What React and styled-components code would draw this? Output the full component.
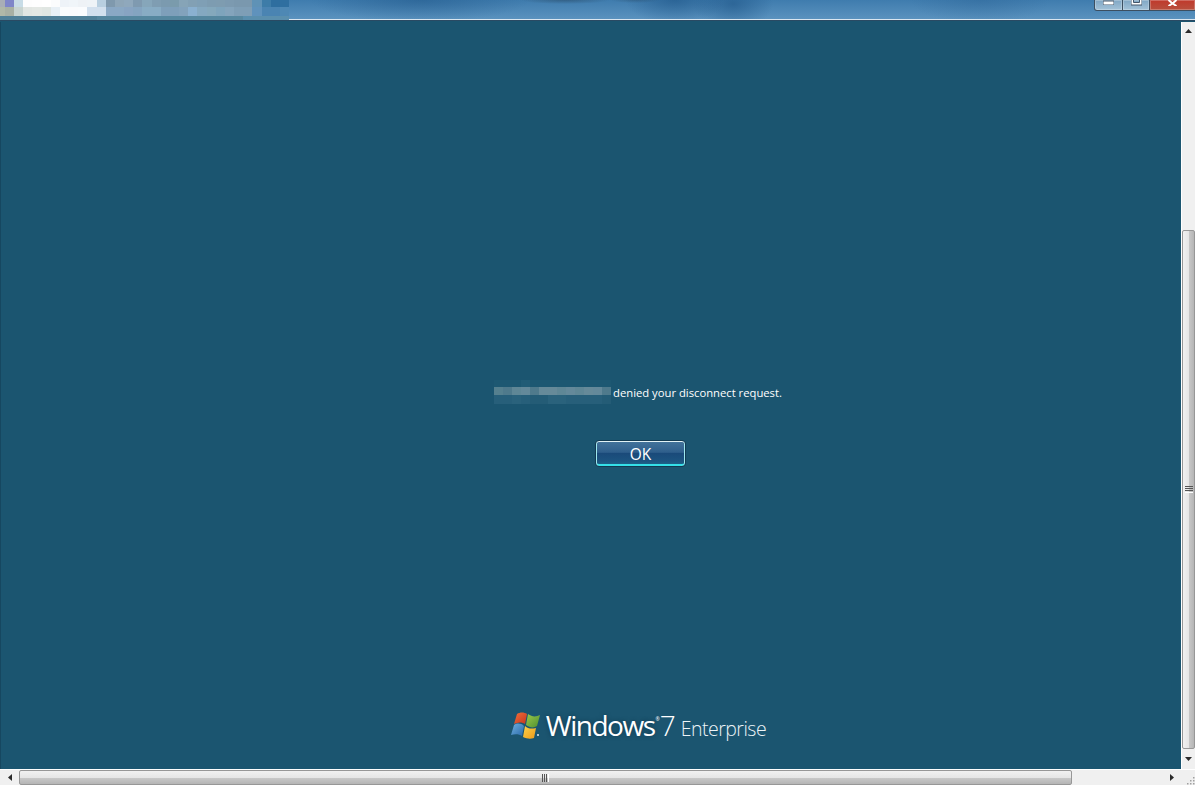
import React from 'react';
import styled, { createGlobalStyle } from 'styled-components';

const GlobalStyle = createGlobalStyle`
  html, body {
    margin: 0;
    padding: 0;
    height: 100%;
    overflow: hidden;
    background: #1b5570;
  }
`;

const Page = styled.div`
  width: 1195px;
  height: 785px;
  display: flex;
  flex-direction: column;
  font-family: "Open Sans", "Noto Sans", sans-serif;
`;

const TitleBar = styled.div`
  height: 19px;
  flex: none;
  display: flex;
  justify-content: space-between;
  align-items: flex-start;
  background:
    radial-gradient(ellipse 45px 4px at 565px 0, rgba(40, 70, 95, 0.5), transparent),
    radial-gradient(ellipse 25px 3px at 635px 0, rgba(40, 70, 95, 0.35), transparent),
    radial-gradient(ellipse 110px 22px at 420px 0, rgba(30, 85, 135, 0.5), transparent),
    radial-gradient(ellipse 50px 24px at 675px 0, rgba(30, 85, 135, 0.6), transparent),
    radial-gradient(ellipse 40px 26px at 733px 4px, rgba(30, 85, 135, 0.6), transparent),
    radial-gradient(ellipse 70px 24px at 980px 0, rgba(40, 95, 145, 0.35), transparent),
    linear-gradient(180deg, #3f7cae 0%, #5a92be 100%);
  border-bottom: 1px solid #d9e6f0;
  box-shadow: 0 1px 0 #2a4a63;
  position: relative;
`;

const Mosaic = styled.div`
  display: grid;
  grid-template-columns: 5px repeat(31, 1fr);
  grid-template-rows: 7px 9px 4px;
  width: 289px;
  flex: none;
`;

const Pixel = styled.span`
  background: ${(p) => p.$c};
`;

const WindowButtons = styled.div`
  display: flex;
  height: 11px;
`;

const CaptionButton = styled.div`
  width: ${(p) => p.$w}px;
  display: flex;
  justify-content: center;
  align-items: flex-start;
  box-sizing: border-box;
  border: 1px solid #3c4f61;
  border-top: none;
  border-left-width: ${(p) => (p.$first ? 1 : 0)}px;
  border-right-width: ${(p) => (p.$last ? 0 : 1)}px;
  border-radius: 0 0 0 ${(p) => (p.$first ? 3 : 0)}px;
  background: ${(p) => p.$bg};
  box-shadow: inset 0 0 0 1px rgba(255, 255, 255, 0.25);
`;

const Middle = styled.div`
  flex: 1;
  display: flex;
  min-height: 0;
  margin-top: 2px;
`;

const Stage = styled.main`
  flex: 1;
  min-width: 0;
  overflow: hidden;
  background: #1b5570;
  border-left: 1px solid #164760;
`;

/* the dialog is laid out wider than the window, hence the scrollbars */
const Canvas = styled.div`
  width: 1279px;
  height: 100%;
  display: flex;
  flex-direction: column;
  align-items: center;
  padding-top: 357px;
  box-sizing: border-box;
`;

const Message = styled.div`
  display: flex;
  align-items: center;
  height: 26px;
  margin-right: 5px;
  gap: 2px;
  font-size: 11.25px;
  color: #fff;
  white-space: nowrap;
`;

const Redacted = styled.div`
  display: grid;
  grid-template-columns: repeat(13, 9px);
  grid-template-rows: 7px 8px 9px;
  width: 117px;
`;

const OkButton = styled.button`
  width: 91px;
  height: 27px;
  margin-top: 35px;
  padding: 0;
  flex: none;
  box-sizing: border-box;
  border: 1px solid #123a52;
  border-radius: 4px;
  outline: none;
  box-shadow: inset 0 1px 0 #e2f2f6, inset 2px 0 0 -1px #9fe8ee, inset 1px 0 0 #9fe8ee, inset -1px 0 0 #9fe8ee, inset 0 -2px 0 #35e0e8;
  background: linear-gradient(180deg, #44749c 0%, #2f5f8c 45%, #1a4a7a 50%, #1c5480 80%, #1f6a8c 100%);
  color: #fff;
  font: 400 15.5px "Open Sans", sans-serif;
`;

const Brand = styled.div`
  margin-top: auto;
  margin-bottom: 27px;
  margin-right: 4px;
  display: flex;
  align-items: center;
  color: #fff;
  white-space: nowrap;
`;

const Flag = styled.svg`
  width: 30px;
  height: 28px;
  margin-right: 5px;
  flex: none;
`;

const Word = styled.span`
  font-weight: 400;
  font-size: 28px;
  letter-spacing: -1.5px;
  line-height: 34px;
  text-shadow: 0 0 4px rgba(10, 40, 60, 0.6);
`;

const Mark = styled.span`
  font-size: 5px;
  align-self: flex-start;
  margin-top: 8px;
  margin-left: 1px;
`;

const Seven = styled.span`
  font-weight: 300;
  font-size: 28px;
  line-height: 34px;
  margin-left: 0;
`;

const Edition = styled.span`
  font-weight: 300;
  font-size: 19.5px;
  line-height: 34px;
  margin-left: 5px;
  position: relative;
  top: 4px;
  letter-spacing: -0.5px;
  color: #eef4f8;
`;

const VBar = styled.div`
  width: 14px;
  flex: none;
  display: flex;
  flex-direction: column;
  background: #f0f0f0;
  border-left: 1px solid #fff;
  box-sizing: border-box;
`;

const ArrowCell = styled.div`
  flex: none;
  width: ${(p) => p.$w || 'auto'};
  height: ${(p) => p.$h || 'auto'};
  display: flex;
  align-items: center;
  justify-content: center;
  color: #333;
  background: #f0f0f0;
`;

const Track = styled.div`
  flex: 1;
  background: #f0f0f0;
`;

const VThumb = styled.div`
  height: 519px;
  flex: none;
  display: flex;
  align-items: center;
  justify-content: center;
  box-sizing: border-box;
  border: 1px solid #979797;
  border-radius: 2px;
  background: linear-gradient(90deg, #f1f1f1 0%, #e6e6e6 50%, #c9c9c9 51%, #b5b5b5 100%);
`;

const HBar = styled.div`
  height: 16px;
  flex: none;
  display: flex;
  background: #f0f0f0;
  border-top: 1px solid #fff;
  box-sizing: border-box;
`;

const HThumb = styled.div`
  width: 1053px;
  flex: none;
  display: flex;
  align-items: center;
  justify-content: center;
  box-sizing: border-box;
  border: 1px solid #979797;
  border-radius: 2px;
  background: linear-gradient(180deg, #f1f1f1 0%, #e6e6e6 50%, #c9c9c9 51%, #b5b5b5 100%);
`;

const Corner = styled.div`
  width: 14px;
  flex: none;
  display: flex;
  align-items: flex-end;
  justify-content: flex-end;
`;

const titleTop = ['#a9aeb6', '#7f86c8', '#c8dce6', '#fdfdfd', '#fefefe', '#ffffff', '#fbfcfd', '#eef3f8', '#f0f5f9', '#eef2f6', '#eef3f7', '#b8cfe0', '#7f99ad', '#8ea6b8', '#8fa8bc', '#7f9ab0', '#86a6ba', '#7f9db2', '#7b9aaf', '#7a9bac', '#86a4b7', '#82a0b4', '#7f9fb5', '#7d9cb1', '#7e9cb0', '#7c9ab0', '#7a98ae', '#7a98ae', '#5f92b6', '#3d7ca8', '#2e6e9f', '#2f6fa0'];
const titleMid = ['#b0b8a8', '#a8b0a4', '#c8d4d0', '#e2e6e2', '#e4e8e4', '#e0e6e2', '#e8f0f6', '#fafcfd', '#fafbfd', '#fafcfe', '#d2e0ee', '#d2e0ee', '#8aa8c4', '#8aa8c4', '#88a4c2', '#84a4c0', '#88acc4', '#88acc4', '#7e9fba', '#7e9fba', '#82a2bc', '#8ab0d0', '#84a8c0', '#84a8bc', '#7ea4bc', '#84a4bc', '#7e9eb6', '#7e9eb6', '#5f92bc', '#4a84b2', '#4a84b2', '#4e88b4'];
const titleLow = (i) => (i > 26 ? '#5a8fae' : i > 10 ? '#55879f' : '#4f8098');

const nameRows = [
  ['#1d5872', '#1d5872', '#1d5872', '#225c76', '#1d5872', '#1d5872', '#1d5872', '#1d5872', '#1d5872', '#1d5872', '#1d5872', '#1d5872', '#1d5872'],
  ['#55808f', '#4f7a8c', '#5f8796', '#64899a', '#4f7a8c', '#668a99', '#668a99', '#5f8796', '#64899a', '#5f8796', '#668a99', '#64899a', '#4f7a8c'],
  ['#275f7a', '#275f7a', '#2a627c', '#275f7a', '#245c76', '#245c76', '#2a627c', '#2a627c', '#275f7a', '#275f7a', '#275f7a', '#275f7a', '#245c76'],
];

const Tri = ({ dir }) => {
  const pts = {
    up: '0,4 7,4 3.5,0',
    down: '0,0 7,0 3.5,4',
    left: '4,0 4,7 0,3.5',
    right: '0,0 0,7 4,3.5',
  }[dir];
  const horiz = dir === 'up' || dir === 'down';
  return (
    <svg width={horiz ? 7 : 4} height={horiz ? 4 : 7}>
      <polygon points={pts} fill="#2b2b2b" />
    </svg>
  );
};

const Grip = ({ vertical }) => (
  <svg width={vertical ? 8 : 7} height={vertical ? 7 : 8}>
    {[0, 1, 2, 3].map((i) =>
      vertical ? (
        <rect key={i} x="0" y={i * 2} width="8" height="1" fill={i === 3 ? '#fff' : '#555'} />
      ) : (
        <rect key={i} x={i * 2} y="0" width="1" height="8" fill={i === 3 ? '#fff' : '#555'} />
      )
    )}
  </svg>
);

export default function App() {
  return (
    <Page>
      <GlobalStyle />
      <TitleBar>
        <Mosaic>
          {titleTop.map((c, i) => <Pixel key={'t' + i} $c={c} />)}
          {titleMid.map((c, i) => <Pixel key={'m' + i} $c={c} />)}
          {titleTop.map((_, i) => <Pixel key={'l' + i} $c={titleLow(i)} />)}
        </Mosaic>
        <WindowButtons>
          <CaptionButton $w={29} $first $bg="linear-gradient(180deg,#7fa6c4,#a3c2d8)">
            <svg width="11" height="5"><rect x="0" y="1" width="11" height="4" fill="#fff" stroke="#44566a" strokeWidth="1" /></svg>
          </CaptionButton>
          <CaptionButton $w={27} $bg="linear-gradient(180deg,#7fa6c4,#a3c2d8)">
            <svg width="11" height="6"><path d="M0 0v5h11V0M2.5 0v2.5h6V0" fill="#fff" stroke="#44566a" strokeWidth="1" fillRule="evenodd" /></svg>
          </CaptionButton>
          <CaptionButton $w={45} $last $bg="linear-gradient(180deg,#c0392b,#b8503e)">
            <svg width="13" height="6"><path d="M2.5 0L6.5 3.5 10.5 0M2.5 6L6.5 3.5 10.5 6" stroke="#fff" strokeWidth="2" fill="none" /></svg>
          </CaptionButton>
        </WindowButtons>
      </TitleBar>
      <Middle>
        <Stage>
          <Canvas>
            <Message>
              <Redacted>
                {nameRows.flat().map((c, i) => <Pixel key={i} $c={c} />)}
              </Redacted>
              <span>denied your disconnect request.</span>
            </Message>
            <OkButton>OK</OkButton>
            <Brand>
              <Flag viewBox="0 0 30 28">
                <defs>
                  <linearGradient id="red" x1="0" y1="0" x2="1" y2="1"><stop offset="0" stopColor="#f0703a" /><stop offset="1" stopColor="#c8341e" /></linearGradient>
                  <linearGradient id="green" x1="0" y1="0" x2="1" y2="1"><stop offset="0" stopColor="#9cc94a" /><stop offset="1" stopColor="#4f9030" /></linearGradient>
                  <linearGradient id="blue" x1="0" y1="0" x2="1" y2="1"><stop offset="0" stopColor="#6fb0e0" /><stop offset="1" stopColor="#2a68a8" /></linearGradient>
                  <linearGradient id="yellow" x1="0" y1="0" x2="1" y2="1"><stop offset="0" stopColor="#fcd24a" /><stop offset="1" stopColor="#ee9a1a" /></linearGradient>
                </defs>
                <path d="M6 3C9 1 13 1 16 3L14 13C11 11 7 11 3 13z" fill="url(#red)" />
                <path d="M17 3C21 6 25 6 29 4L26 15C23 17 19 17 15 14z" fill="url(#green)" />
                <path d="M3 14C6 12 10 12 13 15L11 25C8 23 4 23 0 24z" fill="url(#blue)" />
                <path d="M14 15C17 18 21 18 25 17L23 27C20 28 16 28 12 26z" fill="url(#yellow)" />
                <circle cx="27" cy="24" r="1" fill="#dfe8ee" />
              </Flag>
              <Word>Windows</Word>
              <Mark>®</Mark>
              <Seven>7</Seven>
              <Edition>Enterprise</Edition>
            </Brand>
          </Canvas>
        </Stage>
        <VBar>
          <ArrowCell $h="17px"><Tri dir="up" /></ArrowCell>
          <Track />
          <VThumb><Grip vertical /></VThumb>
          <ArrowCell $h="20px"><Tri dir="down" /></ArrowCell>
        </VBar>
      </Middle>
      <HBar>
        <ArrowCell $w="19px"><Tri dir="left" /></ArrowCell>
        <HThumb><Grip /></HThumb>
        <Track />
        <ArrowCell $w="18px"><Tri dir="right" /></ArrowCell>
        <Corner>
          <svg width="10" height="10">
            {[[8, 2], [8, 5], [5, 5], [8, 8], [5, 8], [2, 8]].map(([x, y]) => (
              <rect key={x + '-' + y} x={x} y={y} width="1.5" height="1.5" fill="#a0a0a0" />
            ))}
          </svg>
        </Corner>
      </HBar>
    </Page>
  );
}
